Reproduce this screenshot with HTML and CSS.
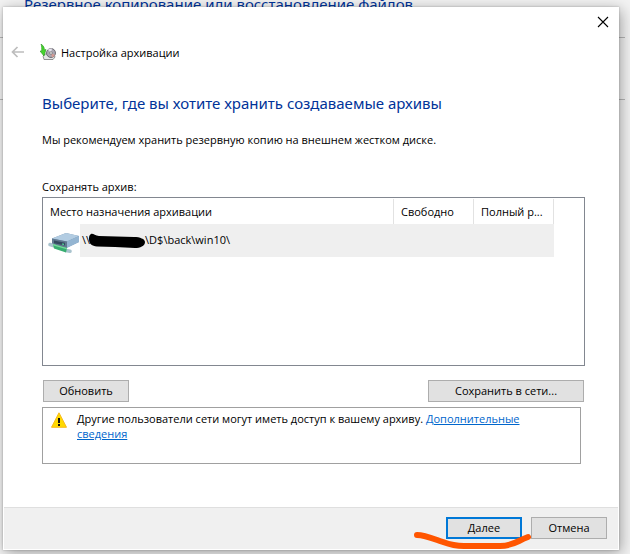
FILE: index.html
```
<!DOCTYPE html>
<html lang="ru">
<head>
  <meta charset="UTF-8">
  <meta name="viewport" content="width=device-width, initial-scale=1.0">
  <title>Настройка архивации</title>
  <link rel="stylesheet" href="styles.css">
</head>
<body>

<!-- Окно панели управления позади мастера -->
<div class="backdrop">
  <div class="backdrop-title">Резервное копирование или восстановление файлов</div>
  <hr class="backdrop-line">
  <hr class="backdrop-line">
</div>

<form class="wizard">
  <div class="close-row">
    <button type="button" class="icon-button" aria-label="Закрыть">
      <svg width="12" height="12" viewBox="0 0 12 12"><path d="M1 1l10 10M11 1L1 11" stroke="#000" stroke-width="1.1"/></svg>
    </button>
  </div>
  <div class="title-bar">
    <button type="button" class="icon-button" aria-label="Назад" disabled>
      <svg width="14" height="12" viewBox="0 0 14 12" fill="none" stroke="#bdbdbd" stroke-width="1.7"><path d="M13 6H1.5M6.500 1L1.500 6l5 5"/></svg>
    </button>
    <svg class="app-icon" width="16" height="16" viewBox="0 0 16 16">
      <path d="M3 12l2-2h9l1 3-2 2.500H4z" fill="#e4e6e6" stroke="#777" stroke-width=".8"/>
      <circle cx="11" cy="9" r="4.500" fill="#aaa6b2" stroke="#66656b" stroke-width=".9"/>
      <path d="M11 9L8 5.500a5 5 0 0 1 4-1z" fill="#e7e4ed"/>
      <path d="M11 9l4 2a5 5 0 0 1-3 2.500z" fill="#d59a93"/>
      <circle cx="11" cy="9" r="1.300" fill="#fff" stroke="#666" stroke-width=".7"/>
      <path d="M1 0c3 2 3.500 4 3.300 6L6 5.500 4 12 0 7l1.600.2C1.800 5 1.800 2 1 0z" fill="#45d52d" stroke="#259519" stroke-width=".6"/>
    </svg>
    <span>Настройка архивации</span>
  </div>

  <div class="content">
    <h1>Выберите, где вы хотите хранить создаваемые архивы</h1>
    <p class="hint">Мы рекомендуем хранить резервную копию на внешнем жестком диске.</p>
    <div class="list-label" id="list-label">Сохранять архив:</div>
    <div class="list">
      <table aria-labelledby="list-label">
        <colgroup><col class="col-icon"><col><col class="col-size"><col class="col-size"></colgroup>
        <thead>
          <tr><th colspan="2">Место назначения архивации</th><th>Свободно</th><th>Полный р...</th></tr>
        </thead>
        <tbody>
          <tr>
            <td class="cell-icon">
              <svg width="32" height="22" viewBox="0 0 32 22">
                <path d="M4 6.500L18 1l13 3v6l-13 6-14-3z" fill="#7894ad"/>
                <path d="M4 6.500L18 1l13 3-12 5.500z" fill="#b2cce2"/>
                <path d="M19 9.500L31 4v6l-12 6z" fill="#94b5d2"/>
                <path d="M4 6.500l15 3V16L4 13z" fill="#60788f"/>
                <path d="M6 8.500l11 2.300v2.700L6 11.300z" fill="#34495f"/>
                <path d="M14 12l2 .4" stroke="#55e29c" stroke-width="1.200"/>
                <path d="M2 12.500l4 1.300M18 18.500l4 .8" stroke="#a9c3ce" stroke-width="3.500" stroke-linecap="round"/>
                <path d="M5 12l14 4-1 4.500-12-4z" fill="#37ad70"/>
                <path d="M5 12l14 4-.3 1.300L5.300 13.500z" fill="#76d99c"/>
              </svg>
            </td>
            <td>\\<svg class="scribble" width="56" height="16" viewBox="0 0 56 16"><path d="M2 1c2-1 4 2 8 2l35 1c6 0 11 2 11 5 0 4-5 6-10 6l-20-1-18-.5C3 13 0 11 0 6c0-2 0-4 2-5z"/></svg>\D$\back\win10\</td>
            <td></td>
            <td></td>
          </tr>
        </tbody>
      </table>
    </div>
    <div class="actions">
      <button type="button" class="button refresh">Обновить</button>
      <button type="button" class="button network">Сохранить в сети...</button>
    </div>
    <div class="notice">
      <svg width="16" height="16" viewBox="0 0 16 16">
        <path d="M8 .8L15.500 15.300H.5z" fill="#ffda00" stroke="#f7b91e" stroke-linejoin="round"/>
        <path d="M7 6h2v5H7zM7 12h2v2H7z" fill="#111"/>
      </svg>
      <div>Другие пользователи сети могут иметь доступ к вашему архиву. <a href="#">Дополнительные сведения</a></div>
    </div>
  </div>

  <div class="footer">
    <div class="marked">
      <button type="submit" class="button primary">Далее</button>
      <svg class="marker" width="118" height="20" viewBox="0 0 118 20"><path d="M4 7c8 0 17 4 26 7 8 3 12 4 21 4h36c13 0 17-5 28-9"/></svg>
    </div>
    <button type="button" class="button">Отмена</button>
  </div>
</form>

</body>
</html>
```
FILE: styles.css
```
* { box-sizing: border-box; }
body {
  margin: 0;
  min-height: 100vh;
  display: grid;
  grid-template: 1fr / 1fr;
  overflow: hidden;
  background: #f3f3f3;
  color: #000;
  font: 11px/15px "Open Sans", "Noto Sans", sans-serif;
}
button { font: inherit; color: inherit; }

/* Фоновое окно и мастер лежат в одной ячейке */
.backdrop, .wizard { grid-area: 1 / 1; }
.backdrop-title, h1 { font: 15px/22px "Noto Sans", "Open Sans", sans-serif; color: #003399; }
.backdrop-title { height: 37px; padding-left: 24px; margin-top: -7px; white-space: nowrap; }
.backdrop-line { margin: 7px 5px 61px 0; border: none; border-top: 1px solid #b8b8b8; }
.backdrop-line + .backdrop-line { margin-top: 0; }

.wizard {
  display: flex;
  flex-direction: column;
  margin: 7px 11px 5px 3px;
  background: #fff;
  box-shadow: 0 0 2px rgba(0,0,0,.25), 2px 3px 14px rgba(0,0,0,.35);
}
.icon-button { display: flex; padding: 0; border: none; background: none; }
.close-row { display: flex; justify-content: flex-end; padding: 9px 10px 0; }
.title-bar { display: flex; align-items: center; padding: 16px 8px 0; }
.app-icon { margin: 0 5px 0 15px; }

.content { flex: 1; padding: 32px 34px 43px 39px; }
h1 { margin: 0; }
.hint { margin: 18px 0 32px; }
.list-label { margin-bottom: 3px; }

.list { min-height: 169px; padding: 1px 30px 1px 0; border: 1px solid #828790; }
table { width: 100%; table-layout: fixed; border-collapse: collapse; }
.col-icon { width: 37px; }
.col-size { width: 80px; }
th { height: 25px; padding: 0 7px; border-right: 1px solid #e2e2e2; text-align: left; font-weight: normal; white-space: nowrap; }
td { height: 33px; padding: 0 2px; background: #efefef; white-space: nowrap; }
.cell-icon { padding: 4px 0 0 5px; background: none; }
.cell-icon svg { display: block; }
.scribble { margin-left: -1px; vertical-align: middle; }

.actions { display: flex; justify-content: space-between; margin: 14px 1px 5px; }
.button { min-width: 76px; height: 22px; padding: 0 8px; border: 1px solid #adadad; background: #e1e1e1; line-height: 18px; }
.refresh { width: 86px; }
.network { width: 156px; }
.primary { border: 2px solid #0078d7; }

.notice { display: flex; gap: 10px; min-height: 57px; margin-right: 4px; padding: 3px 40px 3px 8px; border: 1px solid #a0a0a0; }
.notice svg { flex: none; margin-top: 1px; }
.notice a { color: #0066cc; }

.footer { display: flex; justify-content: flex-end; gap: 9px; margin: 0 1px 1px; padding: 9px 11px 10px; border-top: 1px solid #dfdfdf; background: #f0f0f0; }
.marked { position: relative; }
.marker { position: absolute; left: -33px; top: 11px; fill: none; stroke: #ff5500; stroke-width: 6px; stroke-linecap: round; overflow: visible; pointer-events: none; }
```
